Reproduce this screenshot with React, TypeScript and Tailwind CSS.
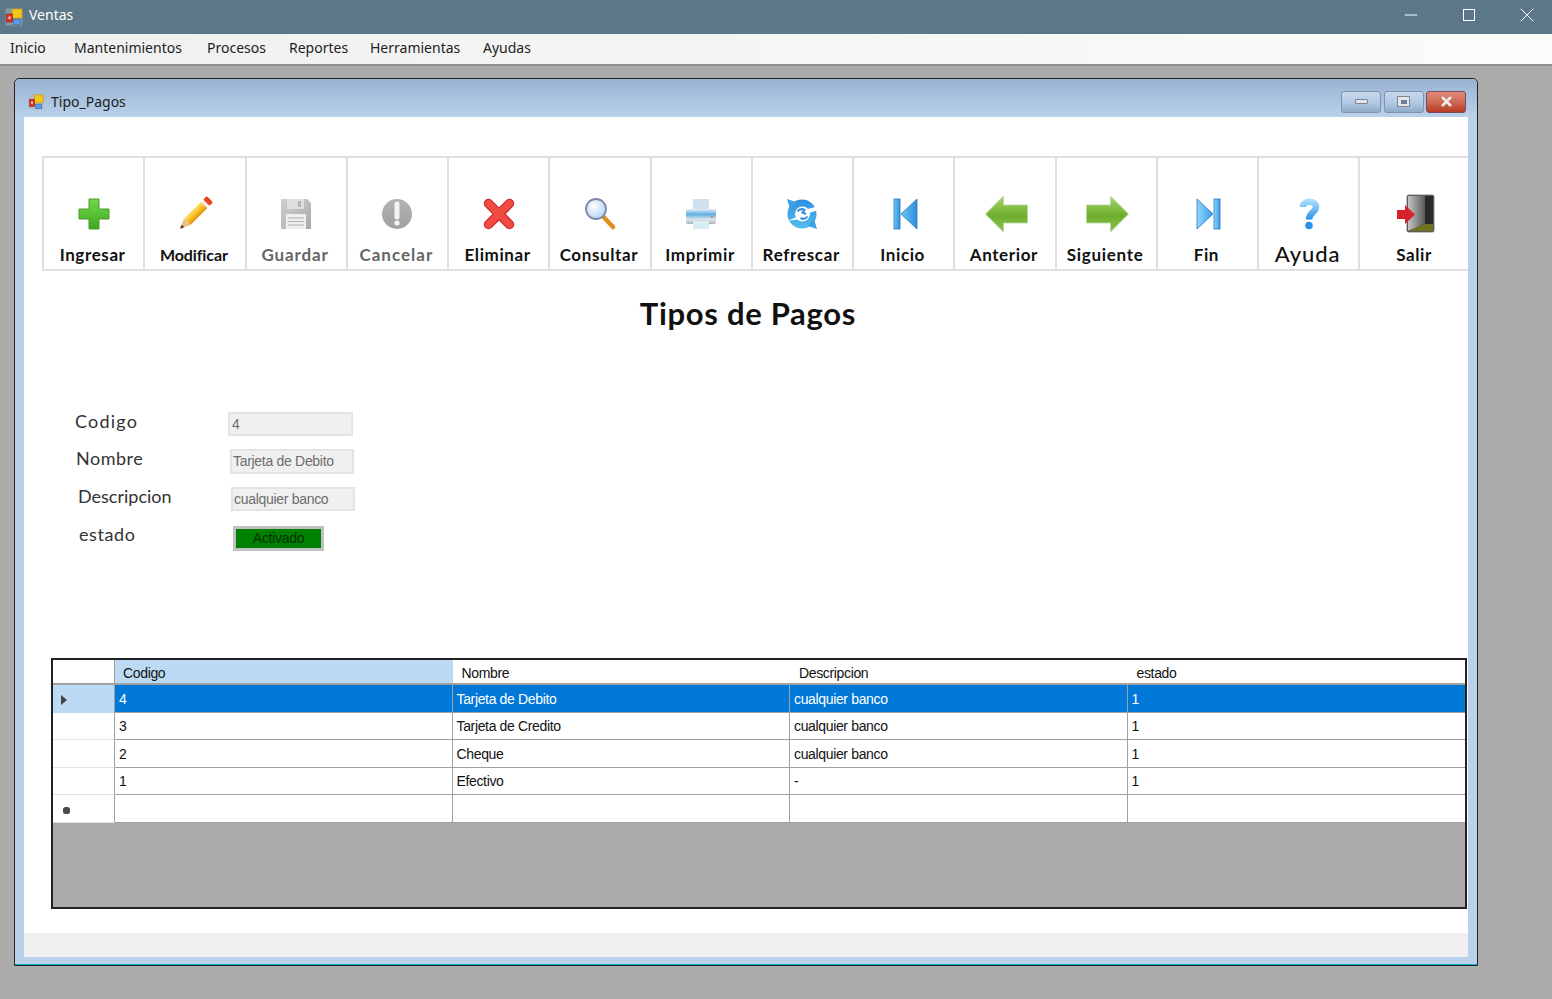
import React from "react";
import { Minus, X } from "lucide-react";

function AppIcon({ size = 18 }: { size?: number }) {
  return (
    <svg width={size} height={size} viewBox="0 0 18 18" className="shrink-0">
      <rect x="0.5" y="0.5" width="17" height="17" fill="#a9b3bb" opacity="0.55" />
      <rect x="7" y="1" width="10" height="9" fill="#f5c518" stroke="#b98a10" strokeWidth="0.6" />
      <rect x="1.5" y="6" width="6" height="8" fill="#d9322a" stroke="#8e1d18" strokeWidth="0.6" />
      <rect x="3.5" y="8.5" width="2" height="2.5" fill="#f4d0cc" />
      <rect x="8.5" y="11.5" width="7" height="5" fill="#5c9be0" stroke="#2e68ad" strokeWidth="0.6" />
    </svg>
  );
}

function PlusIcon() {
  return (
    <svg width="44" height="44" viewBox="0 0 44 44">
      <defs>
        <linearGradient id="plusFill" x1="0" y1="0" x2="0" y2="1">
          <stop offset="0" stopColor="#72d94a" />
          <stop offset="1" stopColor="#3fa822" />
        </linearGradient>
      </defs>
      <path d="M17 7h10v10h10v10H27v10H17V27H7V17h10z" fill="url(#plusFill)" stroke="#4a9a2b" strokeWidth="1" />
    </svg>
  );
}

function PencilIcon() {
  return (
    <svg width="44" height="44" viewBox="0 0 44 44">
      <defs>
        <linearGradient id="pencilFill" x1="0" y1="0" x2="1" y2="0">
          <stop offset="0" stopColor="#fde06a" />
          <stop offset="0.6" stopColor="#f9b91c" />
          <stop offset="1" stopColor="#dd8a0c" />
        </linearGradient>
      </defs>
      <g transform="rotate(45 22 22)">
        <rect x="17.5" y="9" width="9" height="24" fill="url(#pencilFill)" />
        <path d="M17.5 33h9L22 43z" fill="#e8c08a" />
        <path d="M20.2 39h3.6L22 43z" fill="#6b2a12" />
        <rect x="17.5" y="6" width="9" height="3" fill="#f0f0f0" />
        <rect x="17.5" y="1" width="9" height="5" rx="1.5" fill="#ee3d1f" />
      </g>
    </svg>
  );
}

function SaveIcon() {
  return (
    <svg width="44" height="44" viewBox="0 0 44 44">
      <defs>
        <linearGradient id="saveFill" x1="0" y1="0" x2="1" y2="1">
          <stop offset="0" stopColor="#cfcfcf" />
          <stop offset="1" stopColor="#aaaaaa" />
        </linearGradient>
      </defs>
      <path d="M7 7h26l4 4v26H7z" fill="url(#saveFill)" />
      <rect x="13" y="7" width="17" height="10" fill="#dedede" />
      <rect x="24" y="9" width="3" height="6" fill="#b4b4b4" />
      <rect x="12" y="22" width="20" height="15" fill="#eeeeee" />
      <path d="M14 26h16M14 29.5h16M14 33h16" stroke="#b0b0b0" strokeWidth="1.2" />
    </svg>
  );
}

function CancelIcon() {
  return (
    <svg width="44" height="44" viewBox="0 0 44 44">
      <defs>
        <linearGradient id="cancelFill" x1="0" y1="0" x2="0" y2="1">
          <stop offset="0" stopColor="#b4b4b4" />
          <stop offset="1" stopColor="#a0a0a0" />
        </linearGradient>
      </defs>
      <circle cx="22" cy="22" r="15" fill="url(#cancelFill)" />
      <path d="M22 12v13" stroke="#f4f4f4" strokeWidth="5" strokeLinecap="round" />
      <circle cx="22" cy="31" r="2.6" fill="#f4f4f4" />
    </svg>
  );
}

function DeleteIcon() {
  return (
    <svg width="44" height="44" viewBox="0 0 44 44">
      <path d="M11.5 11.5l21 21M32.5 11.5l-21 21" stroke="#c92a2a" strokeWidth="9.5" strokeLinecap="round" />
      <path d="M11.5 11.5l21 21M32.5 11.5l-21 21" stroke="#f14b43" strokeWidth="7" strokeLinecap="round" />
    </svg>
  );
}

function SearchIcon() {
  return (
    <svg width="44" height="44" viewBox="0 0 44 44">
      <defs>
        <radialGradient id="lensFill" cx="0.4" cy="0.35" r="0.8">
          <stop offset="0" stopColor="#ffffff" />
          <stop offset="1" stopColor="#a6cdf2" />
        </radialGradient>
      </defs>
      <path d="M26 25.5l9 9.5" stroke="#de8f1e" strokeWidth="4.5" strokeLinecap="round" />
      <circle cx="18" cy="17" r="10" fill="url(#lensFill)" stroke="#8087ad" strokeWidth="1.8" />
    </svg>
  );
}

function PrintIcon() {
  return (
    <svg width="44" height="44" viewBox="0 0 44 44">
      <defs>
        <linearGradient id="printFill" x1="0" y1="0" x2="0" y2="1">
          <stop offset="0" stopColor="#e8eef4" />
          <stop offset="0.35" stopColor="#5eaee6" />
          <stop offset="0.7" stopColor="#dfe4ea" />
          <stop offset="1" stopColor="#a9b2bc" />
        </linearGradient>
      </defs>
      <rect x="14" y="7" width="16" height="12" fill="#cfe0ee" />
      <rect x="7" y="17" width="30" height="15" rx="2" fill="url(#printFill)" />
      <rect x="14" y="29" width="16" height="8" fill="#d8ecf4" />
      <rect x="32" y="24" width="2" height="1.5" fill="#e8762c" />
    </svg>
  );
}

function RefreshIcon() {
  return (
    <svg width="44" height="44" viewBox="0 0 44 44">
      <defs>
        <linearGradient id="refreshFill" x1="0" y1="0" x2="0" y2="1">
          <stop offset="0" stopColor="#2f8fe0" />
          <stop offset="1" stopColor="#52bdf0" />
        </linearGradient>
      </defs>
      <circle cx="22" cy="22" r="14.5" fill="url(#refreshFill)" />
      <path d="M7 7l9 3-6 7zM37 37l-9-3 6-7z" fill="#3aa3e6" />
      <circle cx="22.5" cy="22" r="7.5" fill="#ffffff" />
      <path d="M37 14.5L24 18l3 3-20 8 17-2.5-3-3 16-5z" fill="#ffffff" />
      <path d="M17.5 19.5a5.5 5.5 0 0 1 7-1.5l-2 2.5 3.5 1.5M27.5 24.5a5.5 5.5 0 0 1-7 1.5" fill="none" stroke="#2f8fe0" strokeWidth="2" />
    </svg>
  );
}

function FirstIcon() {
  return (
    <svg width="44" height="44" viewBox="0 0 44 44">
      <defs>
        <linearGradient id="firstFill" x1="0" y1="0" x2="1" y2="0">
          <stop offset="0" stopColor="#6fc8f5" />
          <stop offset="1" stopColor="#2f8fdc" />
        </linearGradient>
      </defs>
      <rect x="12" y="7" width="6" height="30" fill="url(#firstFill)" stroke="#2a76c4" strokeWidth="0.8" />
      <path d="M35 7v30L19 22z" fill="url(#firstFill)" stroke="#2a76c4" strokeWidth="0.8" />
    </svg>
  );
}

function LastIcon() {
  return (
    <svg width="44" height="44" viewBox="0 0 44 44">
      <defs>
        <linearGradient id="lastFill" x1="0" y1="0" x2="1" y2="0">
          <stop offset="0" stopColor="#8fd8fa" />
          <stop offset="1" stopColor="#3a9ae2" />
        </linearGradient>
      </defs>
      <rect x="29" y="7" width="6" height="30" fill="url(#lastFill)" stroke="#2a76c4" strokeWidth="0.8" />
      <path d="M12 7v30L28 22z" fill="url(#lastFill)" stroke="#2a76c4" strokeWidth="0.8" />
    </svg>
  );
}

function BackIcon() {
  return (
    <svg width="44" height="44" viewBox="0 0 44 44" className="overflow-visible">
      <defs>
        <linearGradient id="backFill" x1="0" y1="0" x2="0" y2="1">
          <stop offset="0" stopColor="#a6d66e" />
          <stop offset="0.55" stopColor="#6eae2c" />
          <stop offset="1" stopColor="#8cc250" />
        </linearGradient>
      </defs>
      <path d="M2.5 22L20.5 4v9h24v18h-24v9z" fill="url(#backFill)" stroke="#b8d8a0" strokeWidth="0.8" />
    </svg>
  );
}

function NextIcon() {
  return (
    <svg width="44" height="44" viewBox="0 0 44 44" className="overflow-visible">
      <defs>
        <linearGradient id="nextFill" x1="0" y1="0" x2="0" y2="1">
          <stop offset="0" stopColor="#a6d66e" />
          <stop offset="0.55" stopColor="#6eae2c" />
          <stop offset="1" stopColor="#8cc250" />
        </linearGradient>
      </defs>
      <path d="M44.5 22L26.5 4v9h-24v18h24v9z" fill="url(#nextFill)" stroke="#b8d8a0" strokeWidth="0.8" />
    </svg>
  );
}

function HelpIcon() {
  return (
    <svg width="44" height="44" viewBox="0 0 44 44">
      <defs>
        <linearGradient id="helpFill" gradientUnits="userSpaceOnUse" x1="0" y1="8" x2="0" y2="28">
          <stop offset="0" stopColor="#a8e0fb" />
          <stop offset="1" stopColor="#2e92e6" />
        </linearGradient>
      </defs>
      <path d="M16 15C16 8 29 8 29 15C29 20.5 22 20 22 27.5" fill="none" stroke="url(#helpFill)" strokeWidth="6.5" />
      <circle cx="22" cy="33.5" r="3.8" fill="#2e92e6" />
    </svg>
  );
}

function ExitIcon() {
  return (
    <svg width="44" height="44" viewBox="0 0 44 44" className="overflow-visible">
      <defs>
        <linearGradient id="doorFill" x1="0" y1="0" x2="1" y2="0">
          <stop offset="0" stopColor="#c4c4c4" />
          <stop offset="1" stopColor="#5a5a5a" />
        </linearGradient>
      </defs>
      <rect x="15" y="3" width="27" height="37" rx="1.5" fill="#2a2a2a" stroke="#8a8a8a" />
      <path d="M16 4h17v28l-17 7z" fill="url(#doorFill)" />
      <path d="M16 39l17-7h8v7z" fill="#6e7422" />
      <path d="M5 18h8v-5l10 9.5L13 32v-5H5z" fill="#d8222b" />
    </svg>
  );
}

const toolButtons = [
  { label: "Ingresar", icon: <PlusIcon />, cls: "text-[17px] tracking-[0.6px] text-[#111]" },
  { label: "Modificar", icon: <PencilIcon />, cls: "text-[16px] tracking-[-0.1px] text-[#111]" },
  { label: "Guardar", icon: <SaveIcon />, cls: "text-[17px] tracking-[0.9px] text-[#666]" },
  { label: "Cancelar", icon: <CancelIcon />, cls: "text-[17px] tracking-[1px] text-[#666]" },
  { label: "Eliminar", icon: <DeleteIcon />, cls: "text-[17px] tracking-[0.6px] text-[#111]" },
  { label: "Consultar", icon: <SearchIcon />, cls: "text-[17px] tracking-[0.6px] text-[#111]" },
  { label: "Imprimir", icon: <PrintIcon />, cls: "text-[17px] tracking-[0.7px] text-[#111]" },
  { label: "Refrescar", icon: <RefreshIcon />, cls: "text-[17px] tracking-[0.7px] text-[#111]" },
  { label: "Inicio", icon: <FirstIcon />, cls: "text-[17px] tracking-[0.6px] text-[#111]" },
  { label: "Anterior", icon: <BackIcon />, cls: "text-[17px] tracking-[0.6px] text-[#111]" },
  { label: "Siguiente", icon: <NextIcon />, cls: "text-[17px] tracking-[0.7px] text-[#111]" },
  { label: "Fin", icon: <LastIcon />, cls: "text-[17px] tracking-[0.6px] text-[#111]" },
];

const rows = [
  ["4", "Tarjeta de Debito", "cualquier banco", "1"],
  ["3", "Tarjeta de Credito", "cualquier banco", "1"],
  ["2", "Cheque", "cualquier banco", "1"],
  ["1", "Efectivo", "-", "1"],
  ["", "", "", ""],
];

const menuItems = [
  { label: "Inicio", cls: "w-[64px]" },
  { label: "Mantenimientos", cls: "w-[133px]" },
  { label: "Procesos", cls: "w-[82px]" },
  { label: "Reportes", cls: "w-[81px]" },
  { label: "Herramientas", cls: "w-[113px]" },
  { label: "Ayudas", cls: "w-[60px]" },
];

function WinButton({ red, children }: { red?: boolean; children: React.ReactNode }) {
  return (
    <div
      className={
        red
          ? "w-[40px] h-[22px] rounded-[3px] border border-[#7d4a5a] flex items-center justify-center bg-gradient-to-b from-[#e08a78] via-[#cf6a55] to-[#b83a22]"
          : "w-[40px] h-[22px] rounded-[3px] border border-[#7f93ad] flex items-center justify-center bg-gradient-to-b from-[#c6d8ec] via-[#b3cae4] to-[#8fabc9]"
      }
    >
      {children}
    </div>
  );
}

export default function App() {
  return (
    <div className="w-screen h-screen overflow-hidden bg-[#ababab] font-['Noto_Sans',sans-serif]">
      {/* main form title */}
      <div className="h-[34px] bg-[#5c7888] flex items-center pl-[5px] text-white">
        <AppIcon />
        <span className="ml-[6px] text-[14px] leading-none -mt-[4px]">Ventas</span>
        <div className="ml-auto mr-[-3px] flex items-center -mt-[4px]">
          <div className="w-[58px] flex justify-center">
            <Minus size={20} strokeWidth={1} absoluteStrokeWidth />
          </div>
          <div className="w-[58px] flex justify-center">
            <div className="w-[12px] h-[12px] border border-white" />
          </div>
          <div className="w-[58px] mr-[-1px] flex justify-center">
            <X size={24} strokeWidth={1} absoluteStrokeWidth />
          </div>
        </div>
      </div>

      {/* menu */}
      <div className="h-[32px] bg-gradient-to-r from-[#f0f0f0] to-[#fbfbfb] border-b-2 border-[#8f8f8f] flex items-center pl-[10px] pb-[3px] text-[14px] text-[#222]">
        {menuItems.map((m) => (
          <span key={m.label} className={m.cls}>
            {m.label}
          </span>
        ))}
      </div>

      {/* child window */}
      <div className="ml-[14px] mt-[12px] w-[1464px] h-[888px] rounded-t-[5px] border border-[#222] bg-[#b9d1ea] shadow-[inset_0_-1px_0_#00b4c8] flex flex-col">
        <div className="h-[38px] shrink-0 rounded-t-[5px] bg-gradient-to-b from-[#98b3d3] to-[#b9d1ea] flex items-center pt-[7px] pl-[13px] pr-[11px]">
          <AppIcon size={16} />
          <span className="ml-[7px] text-[14px] text-[#222]">Tipo_Pagos</span>
          <div className="ml-auto flex gap-[2.5px]">
            <WinButton>
              <div className="w-[13px] h-[5px] rounded-[1px] bg-[#e4e4e4] border border-[#7b8797]" />
            </WinButton>
            <WinButton>
              <div className="w-[13px] h-[11px] bg-[#e4e4e4] border border-[#7b8797] flex items-center justify-center">
                <div className="w-[6px] h-[4px] bg-[#6a7f9a]" />
              </div>
            </WinButton>
            <WinButton red>
              <X size={15} strokeWidth={4} className="text-[#eeeeee]" />
            </WinButton>
          </div>
        </div>

        <div className="mx-[9px] h-[840px] bg-white flex flex-col font-['Lato',sans-serif]">
          {/* toolbar */}
          <div className="mt-[39px] ml-[18px] h-[115px] flex overflow-hidden">
            {toolButtons.map((b) => (
              <div
                key={b.label}
                className="w-[101.25px] h-full shrink-0 border-2 border-r-0 border-[#e0e0e0] flex flex-col items-center pt-[34px]"
              >
                <div>{b.icon}</div>
                <span className={"mt-[9px] pr-[2px] leading-[20px] font-bold " + b.cls}>{b.label}</span>
              </div>
            ))}
            <div className="w-[101.25px] h-full shrink-0 border-2 border-r-0 border-[#e0e0e0] flex flex-col items-center pt-[34px]">
              <div>
                <HelpIcon />
              </div>
              <span className="mt-[8px] pr-[2px] text-[22px] leading-[20px] font-medium tracking-[0.9px] text-[#111]">
                Ayuda
              </span>
            </div>
            <div className="grow h-full border-y-2 border-l-2 border-[#e0e0e0] flex flex-col items-center pt-[34px]">
              <div>
                <ExitIcon />
              </div>
              <span className="mt-[9px] text-[17px] leading-[20px] font-bold tracking-[0.6px] text-[#111]">
                Salir
              </span>
            </div>
          </div>

          <h1 className="mt-[22px] ml-[4px] text-center text-[31px] leading-[40px] font-bold tracking-[0.7px] text-[#111]">
            Tipos de Pagos
          </h1>

          {/* form */}
          <div className="mt-[79px] text-[18px] text-[#333] flex flex-col">
            <div className="h-[24px] ml-[51px] flex items-center">
              <span className="w-[153px] pb-[6px] tracking-[1.2px]">Codigo</span>
              <div className="w-[125px] h-[24px] bg-[#f0f0f0] border-2 border-[#e3e3e3] flex items-center pl-[2px] font-['Liberation_Sans',sans-serif] text-[14px] tracking-[-0.3px] text-[#6d6d6d]">
                4
              </div>
            </div>
            <div className="h-[25px] mt-[13px] ml-[52px] flex items-center">
              <span className="w-[154px] pb-[6px] tracking-[0.5px]">Nombre</span>
              <div className="w-[124px] h-[25px] bg-[#f0f0f0] border-2 border-[#e3e3e3] flex items-center pl-[1px] font-['Liberation_Sans',sans-serif] text-[14px] tracking-[-0.3px] text-[#6d6d6d]">
                Tarjeta de Debito
              </div>
            </div>
            <div className="h-[24px] mt-[13px] ml-[54px] flex items-center">
              <span className="w-[153px] pb-[6px] tracking-[0px]">Descripcion</span>
              <div className="w-[124px] h-[24px] bg-[#f0f0f0] border-2 border-[#e3e3e3] flex items-center pl-[1px] font-['Liberation_Sans',sans-serif] text-[14px] tracking-[-0.3px] text-[#6d6d6d]">
                cualquier banco
              </div>
            </div>
            <div className="h-[25px] mt-[15px] ml-[55px] flex items-center">
              <span className="w-[154px] pb-[8px] tracking-[0.6px]">estado</span>
              <div className="w-[91px] h-[25px] bg-[#008000] border-[3px] border-[#c0c0c0] flex items-center justify-center font-['Liberation_Sans',sans-serif] text-[14px] tracking-[-0.3px] text-[#003300]">
                Activado
              </div>
            </div>
          </div>

          {/* data grid */}
          <div className="mt-[107px] ml-[27px] w-[1416px] h-[251px] border-2 border-[#222] bg-[#ababab] font-['Liberation_Sans',sans-serif] text-[14px] tracking-[-0.35px] text-[#111]">
            <div className="h-[25px] flex bg-white">
              <div className="w-[62px] border-r border-b-2 border-[#a0a0a0]" />
              {["Codigo", "Nombre", "Descripcion", "estado"].map((h, i) => (
                <div
                  key={h}
                  className={
                    i === 0
                      ? "w-[337.5px] pl-[8px] pt-[3px] flex items-center border-b-2 border-[#a0a0a0] bg-[#bcdaf3]"
                      : "w-[337.5px] pl-[9px] pt-[3px] flex items-center border-b-2 border-[#a0a0a0]"
                  }
                >
                  {h}
                </div>
              ))}
            </div>
            {rows.map((row, r) => (
              <div key={r} className={r === 0 ? "h-[27.5px] flex bg-[#0078d7] text-white" : "h-[27.5px] flex bg-white"}>
                <div
                  className={
                    r === 0
                      ? "w-[62px] border-r border-[#a0a0a0] bg-[#bcdaf3] flex items-center pl-[7px] pt-[2px]"
                      : "w-[62px] border-r border-b border-r-[#a0a0a0] border-b-[#e2e2e2] bg-white flex items-center pl-[10px] pt-[5px]"
                  }
                >
                  {r === 0 && (
                    <svg width="8" height="12" viewBox="0 0 8 12">
                      <path d="M1 1v10l6-5z" fill="#444" />
                    </svg>
                  )}
                  {r === 4 && <div className="w-[7px] h-[7px] rounded-[2.5px] bg-[#4a4a4a]" />}
                </div>
                {row.map((cell, c) => (
                  <div
                    key={c}
                    className="w-[337.5px] pl-[4px] pt-[2px] flex items-center border-r border-b border-[#a0a0a0] last:border-r-0"
                  >
                    {cell}
                  </div>
                ))}
              </div>
            ))}
          </div>

          <div className="mt-auto h-[24px] bg-[#f0f0f0]" />
        </div>
      </div>
    </div>
  );
}
